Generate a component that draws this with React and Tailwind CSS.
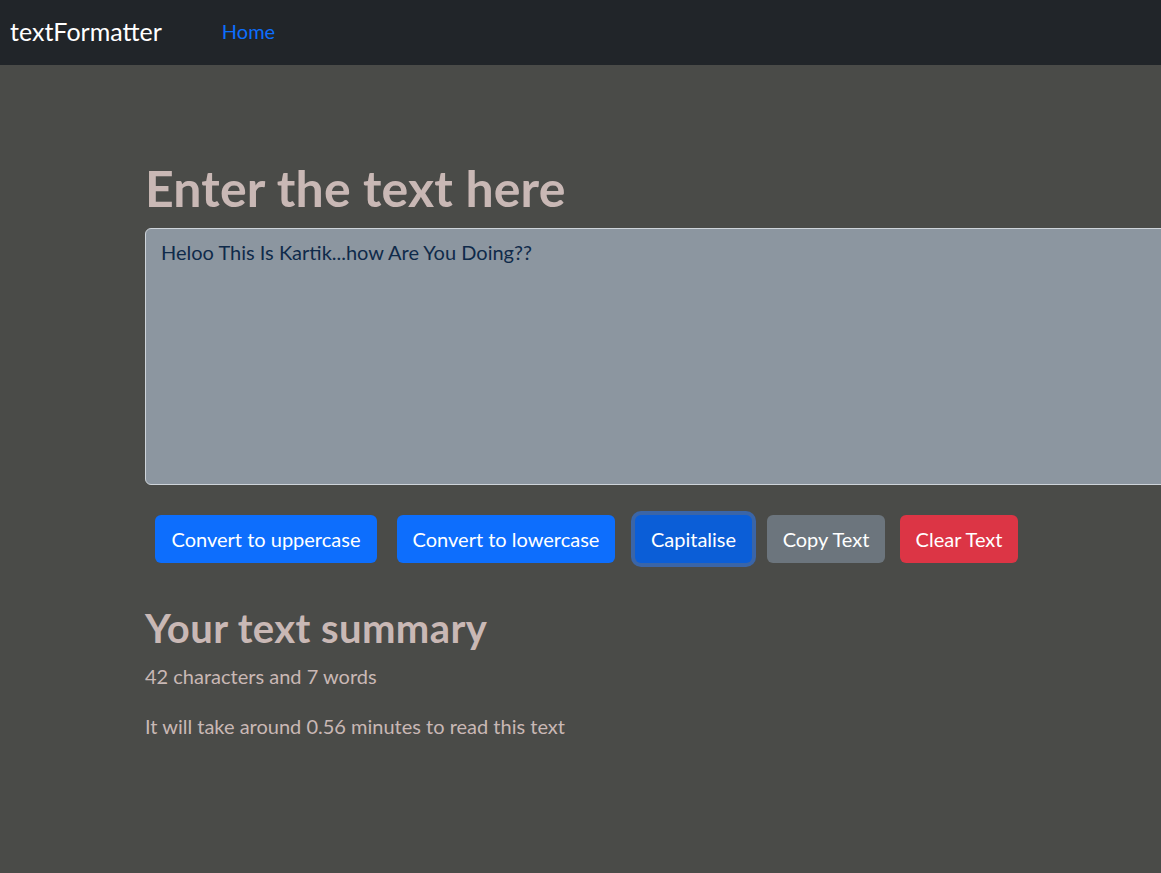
import React from "react";

export default function App() {
  return (
    <div className="w-full min-h-screen overflow-hidden bg-[#4a4b48] font-['Lato','Noto_Sans',sans-serif]">
      <nav className="h-[65px] bg-[#212529] flex items-center">
        <span className="ml-[10px] -mt-[3px] text-[25px] text-white leading-none">textFormatter</span>
        <a className="ml-[60px] -mt-[4px] text-[20px] text-[#0d6efd] leading-none">Home</a>
      </nav>
      <main className="pl-[145px] pt-[93px]">
        <h1 className="text-[50px] leading-[60px] font-bold tracking-[0.15px] text-[#c9b8b5] mb-[10px]">Enter the text here</h1>
        <textarea
          className="block w-[1200px] h-[257px] bg-[#8c96a0] border border-[#ced4da] rounded-l-[6px] px-[15px] py-[8px] text-[20px] leading-[30px] text-[#0f2a4a] outline-none resize-none"
          defaultValue="Heloo This Is Kartik...how Are You Doing??"
        />
        <div className="flex items-center mt-[30px] h-[48px]">
          <button className="ml-[10px] w-[222px] h-[48px] rounded-[6px] bg-[#0d6efd] text-white text-[20px]">Convert to uppercase</button>
          <button className="ml-[20px] w-[218px] h-[48px] rounded-[6px] bg-[#0d6efd] text-white text-[20px]">Convert to lowercase</button>
          <button className="ml-[20px] w-[117px] h-[48px] rounded-[6px] bg-[#0b5ed7] text-white text-[20px] shadow-[0_0_0_4px_#3a65a8]">Capitalise</button>
          <button className="ml-[15px] w-[118px] h-[48px] rounded-[6px] bg-[#6c757d] text-white text-[20px]">Copy Text</button>
          <button className="ml-[15px] w-[118px] h-[48px] rounded-[6px] bg-[#dc3545] text-white text-[20px]">Clear Text</button>
        </div>
        <h2 className="mt-[41px] text-[40px] leading-[48px] font-bold tracking-[0.4px] text-[#c9b8b5] mb-[9px]">Your text summary</h2>
        <p className="text-[20px] leading-[30px] text-[#c9b8b5] mb-[20px]">42 characters and 7 words</p>
        <p className="text-[20px] leading-[30px] text-[#c9b8b5]">It will take around 0.56 minutes to read this text</p>
      </main>
    </div>
  );
}
